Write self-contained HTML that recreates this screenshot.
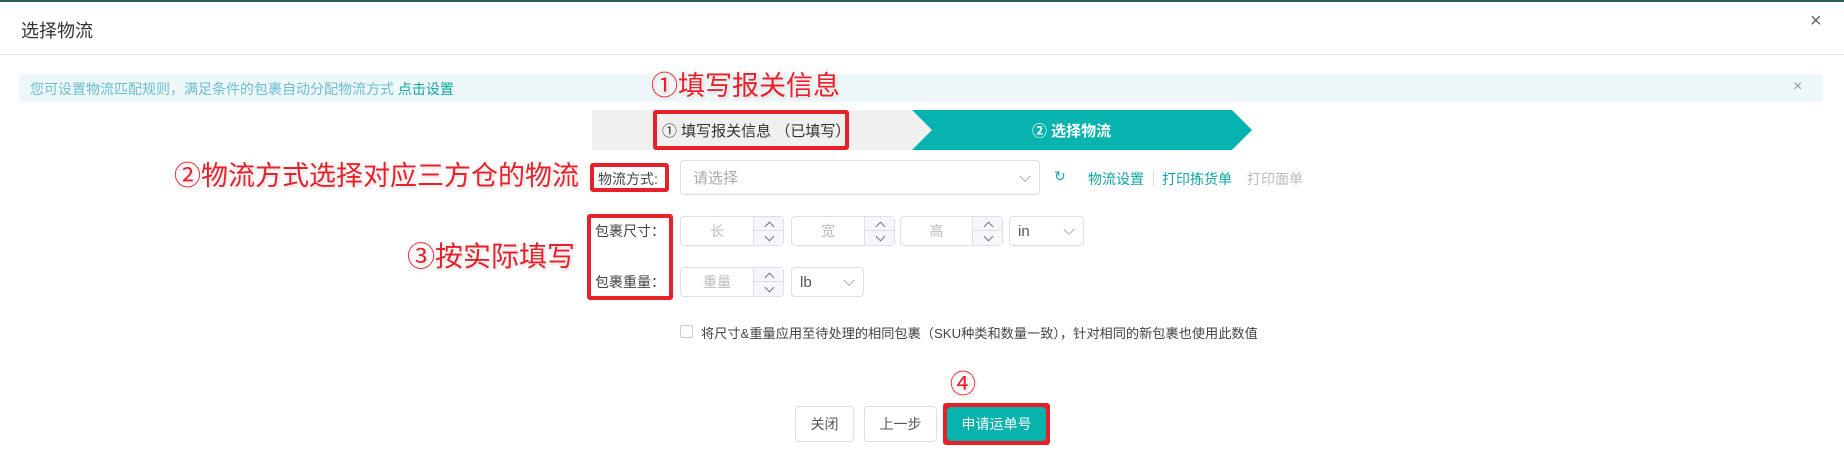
<!DOCTYPE html>
<html><head><meta charset="utf-8"><style>
*{margin:0;padding:0;box-sizing:border-box}
body{width:1844px;height:456px;background:#fff;position:relative;overflow:hidden;font-family:"Liberation Sans","Noto Sans CJK SC",sans-serif;color:#333}
.a{position:absolute}
.ann{position:absolute;color:#e8202a;font-size:28px;line-height:1;white-space:nowrap;text-shadow:0 0 2px #fff,0 0 3px #fff,1px 1px 3px #bbb}
.rb{position:absolute;border:4px solid #e8202a;border-radius:3px}
.inp{position:absolute;border:1px solid #dcdfe6;border-radius:4px;background:#fff;font-size:14px;color:#bbb}
.num .ph{position:absolute;left:0;top:0;bottom:0;right:30px;display:flex;align-items:center;justify-content:center}
.num .sp{position:absolute;right:0;top:0;bottom:0;width:30px;border-left:1px solid #dcdfe6;background:#f5f7fa}
.num .sp div{height:50%;position:relative}
.num .sp div:first-child{border-bottom:1px solid #dcdfe6}
.num .sp div::after{content:"";position:absolute;left:12px;width:6px;height:6px;border-left:1px solid #777;border-top:1px solid #777}
.num .sp div:first-child::after{top:6px;transform:rotate(45deg)}
.num .sp div:last-child::after{top:2px;transform:rotate(225deg)}
.sel{display:flex;align-items:center;padding-left:8px;color:#555;font-size:15px}
.chev{position:absolute;right:10px;top:50%;width:8px;height:8px;border-right:1px solid #aaa;border-bottom:1px solid #aaa;transform:translateY(-70%) rotate(45deg)}
.lbl{position:absolute;font-size:14px;color:#444;white-space:nowrap}
.btn{position:absolute;border:1px solid #dcdfe6;border-radius:4px;display:flex;align-items:center;justify-content:center;font-size:14px;color:#555;background:#fff}
</style></head><body>
<div class="a" style="left:0;top:0;width:1844px;height:2px;background:#2d5f57"></div>
<div class="a" style="left:21px;top:17px;font-size:18px;color:#333">选择物流</div>
<div class="a" style="left:1810px;top:10px;font-size:20px;color:#666">×</div>
<div class="a" style="left:0;top:54px;width:1844px;height:1px;background:#e4e4e4"></div>

<div class="a" style="left:19px;top:74px;width:1804px;height:28px;background:#eef7fa;border-radius:3px"></div>
<div class="a" style="left:30px;top:79px;font-size:14px;color:#6bbfd0">您可设置物流匹配规则，满足条件的包裹自动分配物流方式 <span style="color:#0fa7a1">点击设置</span></div>
<div class="a" style="left:1793px;top:78px;font-size:16px;color:#999">×</div>
<div class="ann" style="left:651px;top:73px;font-size:27px">①填写报关信息</div>

<svg class="a" style="left:592px;top:110px" width="660" height="40">
<rect x="0" y="0" width="340" height="40" fill="#f0f0f0"/>
<polygon points="320,0 640,0 660,20 640,40 320,40 340,20" fill="#06b3af"/>
</svg>
<div class="a" style="left:662px;top:120px;font-size:15px;color:#333">① 填写报关信息 （已填写）</div>
<div class="a" style="left:1032px;top:120px;font-size:15px;color:#fff;font-weight:bold">② 选择物流</div>
<div class="rb" style="left:653px;top:110px;width:196px;height:40px"></div>

<div class="ann" style="left:174px;top:163px;font-size:27px">②物流方式选择对应三方仓的物流</div>
<div class="lbl" style="left:598px;top:169px">物流方式:</div>
<div class="rb" style="left:590px;top:163px;width:79px;height:29px"></div>
<div class="inp sel" style="left:680px;top:160px;width:360px;height:35px;color:#aaa;padding-left:12px">请选择<div class="chev"></div></div>
<div class="a" style="left:1054px;top:168px;font-size:14px;color:#0fa7a1">↻</div>
<div class="a" style="left:1088px;top:169px;font-size:14px;color:#0fa7a1">物流设置</div>
<div class="a" style="left:1153px;top:170px;width:1px;height:16px;background:#ddd"></div>
<div class="a" style="left:1162px;top:169px;font-size:14px;color:#0fa7a1">打印拣货单</div>
<div class="a" style="left:1247px;top:169px;font-size:14px;color:#bbb">打印面单</div>

<div class="ann" style="left:407px;top:243px">③按实际填写</div>
<div class="lbl" style="left:595px;top:221px">包裹尺寸：</div>
<div class="lbl" style="left:595px;top:272px">包裹重量：</div>
<div class="rb" style="left:587px;top:214px;width:86px;height:86px"></div>

<div class="inp num" style="left:680px;top:216px;width:104px;height:30px"><div class="ph">长</div><div class="sp"><div></div><div></div></div></div>
<div class="inp num" style="left:791px;top:216px;width:104px;height:30px"><div class="ph">宽</div><div class="sp"><div></div><div></div></div></div>
<div class="inp num" style="left:900px;top:216px;width:103px;height:30px"><div class="ph">高</div><div class="sp"><div></div><div></div></div></div>
<div class="inp sel" style="left:1009px;top:216px;width:75px;height:30px">in<div class="chev"></div></div>
<div class="inp num" style="left:680px;top:267px;width:104px;height:30px"><div class="ph">重量</div><div class="sp"><div></div><div></div></div></div>
<div class="inp sel" style="left:791px;top:267px;width:73px;height:30px">lb<div class="chev"></div></div>

<div class="a" style="left:680px;top:325px;width:13px;height:13px;border:1px solid #ccc;border-radius:2px"></div>
<div class="a" style="left:701px;top:323px;font-size:13.2px;color:#444">将尺寸&amp;重量应用至待处理的相同包裹（SKU种类和数量一致），针对相同的新包裹也使用此数值</div>

<div class="ann" style="left:950px;top:371px;font-size:26px">④</div>
<div class="btn" style="left:795px;top:406px;width:59px;height:36px">关闭</div>
<div class="btn" style="left:864px;top:406px;width:73px;height:36px">上一步</div>
<div class="a" style="left:943px;top:403px;width:107px;height:42px;background:#e8202a;border-radius:3px"></div>
<div class="btn" style="left:947px;top:407px;width:99px;height:34px;background:#06b3af;border:none;color:#fff">申请运单号</div>
</body></html>
